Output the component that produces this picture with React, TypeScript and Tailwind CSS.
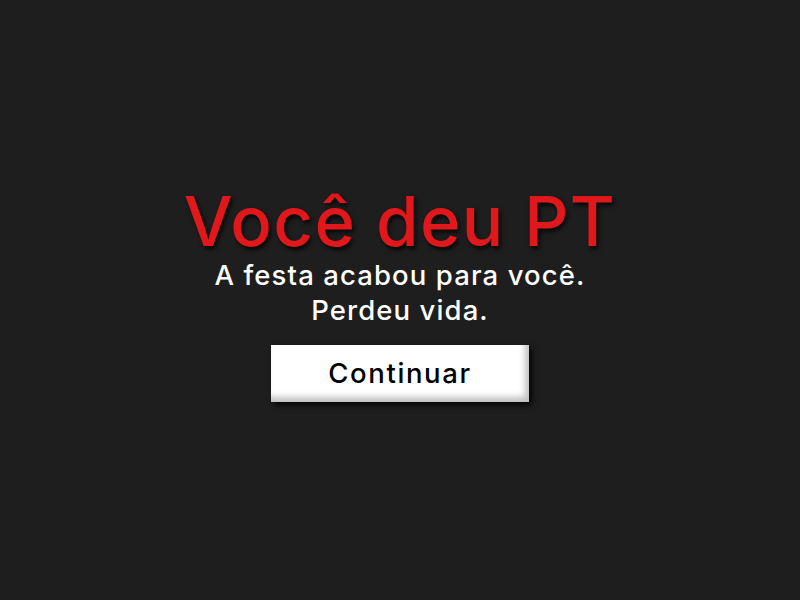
export default function App() {
  return (
    <div className="w-[800px] h-[600px] bg-[#1e1e1e] flex flex-col items-center justify-center pb-[10px]" style={{ fontFamily: 'Inter, "Open Sans", sans-serif' }}>
      <h1 className="text-[69px] leading-[60px] pt-[3px] font-medium text-[#e0171b] [text-shadow:2px_3px_4px_rgba(0,0,0,0.8)] tracking-[1.3px]">Você deu PT</h1>
      <p className="mt-[7px] text-[27.5px] leading-[35px] font-medium text-white text-center tracking-[1.1px]">A festa acabou para você.<br />Perdeu vida.</p>
      <button className="mt-[17px] w-[258px] h-[57px] bg-white text-black text-[27.5px] font-medium tracking-[1.6px] shadow-[inset_-4px_-5px_6px_rgba(0,0,0,0.25),3px_3px_6px_rgba(0,0,0,0.9)]">Continuar</button>
    </div>
  );
}
